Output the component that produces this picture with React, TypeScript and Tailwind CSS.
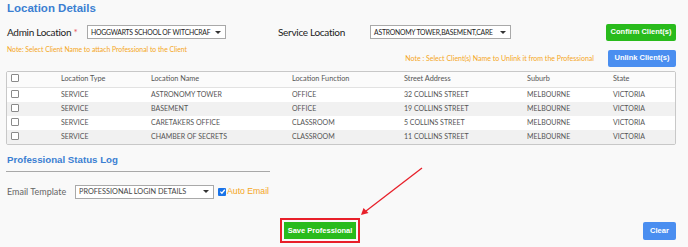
import React from "react";

const lato = "font-['Lato','Open_Sans',sans-serif]";
const arial = "font-['Liberation_Sans',Arial,sans-serif]";

function Box() {
  return <span className="inline-block w-[8px] h-[8px] border border-[#8a8a8a] rounded-[1px] bg-white" />;
}

function Select({ text, w, t }: { text: string; w: string; t?: string }) {
  return (
    <div className={`${w} h-[14px] border border-[#a9a9a9] bg-white flex items-center justify-between pl-[3px] pr-[4px]`}>
      <span className={`${lato} ${t ?? "text-[6.8px] tracking-[-0.2px] text-[#222]"} leading-none whitespace-nowrap`}>{text}</span>
      <span className="w-0 h-0 border-l-[3px] border-r-[3px] border-t-[3px] border-l-transparent border-r-transparent border-t-[#333] ml-[3px] shrink-0" />
    </div>
  );
}

const rows = [
  ["SERVICE", "ASTRONOMY TOWER", "OFFICE", "32 COLLINS STREET", "MELBOURNE", "VICTORIA"],
  ["SERVICE", "BASEMENT", "OFFICE", "19 COLLINS STREET", "MELBOURNE", "VICTORIA"],
  ["SERVICE", "CARETAKERS OFFICE", "CLASSROOM", "5 COLLINS STREET", "MELBOURNE", "VICTORIA"],
  ["SERVICE", "CHAMBER OF SECRETS", "CLASSROOM", "11 COLLINS STREET", "MELBOURNE", "VICTORIA"],
];

const cols = ["w-[54px]", "w-[90px]", "w-[141px]", "w-[112px]", "w-[123px]", "w-[86px]", "w-[64px]"];

export default function App() {
  return (
    <div className="relative w-[688px] h-[247px] bg-[#f9f9f9] overflow-hidden pl-[7px] pr-[12px]">
      <div className={`${arial} text-[11.5px] font-bold text-[#3b7fd2] leading-none pt-[3px]`}>Location Details</div>

      <div className="flex items-center mt-[9px] h-[17px]">
        <div className={`${lato} text-[10px] tracking-[-0.3px] text-[#222] w-[80px] whitespace-nowrap`}>
          Admin Location <span className="text-[#e8585e]">*</span>
        </div>
        <Select text="HOGGWARTS SCHOOL OF WITCHCRAF" w="w-[139px]" />
        <div className={`${lato} text-[10px] tracking-[-0.3px] text-[#222] ml-[52px] w-[92px] whitespace-nowrap`}>Service Location</div>
        <Select text="ASTRONOMY TOWER,BASEMENT,CARE" w="w-[141px]" />
        <button className={`${arial} ml-auto w-[70px] h-[17px] bg-[#29bb1c] rounded-[2px] text-white text-[7.5px] font-bold`}>Confirm Client(s)</button>
      </div>

      <div className="flex justify-between items-start h-[30px]">
        <div className={`${lato} text-[6.8px] text-[#f5a623] mt-[3px]`}>Note: Select Client Name to attach Professional to the Client</div>
        <div className="flex items-center mt-[9px]">
          <span className={`${lato} text-[7px] text-[#f5a623] mr-[14px]`}>Note : Select Client(s) Name to Unlink it from the Professional</span>
          <button className={`${arial} w-[68px] h-[17px] bg-[#4a8ef0] rounded-[2px] text-white text-[7.5px] font-bold`}>Unlink Client(s)</button>
        </div>
      </div>

      <div className="-ml-[1px] w-[670px] border border-[#c8c8c8] rounded-[2px] bg-white overflow-hidden">
        <table className={`${lato} w-full border-collapse table-fixed text-[7px] text-[#555]`}>
          <colgroup>
            {cols.map((c, i) => (
              <col key={i} className={c} />
            ))}
          </colgroup>
          <thead>
            <tr className="h-[16px] bg-[#fbfbfb] border-b border-[#e2e2e2]">
              <th className="text-left pl-[4px] font-normal"><Box /></th>
              {["Location Type", "Location Name", "Location Function", "Street Address", "Suburb", "State"].map((h) => (
                <th key={h} className="text-left font-normal text-[7.3px]">{h}</th>
              ))}
            </tr>
          </thead>
          <tbody>
            {rows.map((r, i) => (
              <tr key={i} className={`h-[14px] ${i % 2 === 1 ? "bg-[#f1f1f1]" : "bg-white"}`}>
                <td className="pl-[4px] leading-none"><Box /></td>
                {r.map((c, j) => (
                  <td key={j} className="whitespace-nowrap leading-none">{c}</td>
                ))}
              </tr>
            ))}
          </tbody>
        </table>
      </div>

      <div className={`${arial} text-[9.7px] font-bold text-[#3b7fd2] leading-none mt-[10px]`}>Professional Status Log</div>
      <div className="w-[264px] -ml-[1px] h-[1px] bg-[#a8a8a8] mt-[7px]" />

      <div className="flex items-center mt-[12px] h-[15px]">
        <div className={`${lato} text-[9px] text-[#666] w-[68px]`}>Email Template</div>
        <Select text="PROFESSIONAL LOGIN DETAILS" w="w-[139px]" t="text-[7.3px] text-[#444]" />
        <span className="ml-[4px] w-[8px] h-[8px] bg-[#1a73e8] rounded-[1px] flex items-center justify-center">
          <svg width="7" height="7" viewBox="0 0 8 8"><path d="M1.5 4.2 L3.3 6 L6.6 2" stroke="white" strokeWidth="1.4" fill="none" /></svg>
        </span>
        <span className={`${arial} text-[8.7px] text-[#f5a623] ml-[1px]`}>Auto Email</span>
      </div>

      <div className="flex items-center mt-[19px]">
        <div className="ml-[273px] border-2 border-[#e8202a] p-[2px]">
          <button className={`${arial} w-[72px] h-[17px] bg-[#29bb1c] text-white text-[7.5px] font-bold block`}>Save Professional</button>
        </div>
        <button className={`${arial} ml-auto w-[33px] h-[18px] bg-[#4a8ef0] rounded-[2px] text-white text-[7.5px] font-bold`}>Clear</button>
      </div>

      <svg className="absolute left-0 top-0" width="688" height="247" viewBox="0 0 688 247">
        <line x1="422" y1="168" x2="366" y2="211" stroke="#e8202a" strokeWidth="1.3" />
        <path d="M361 215 L363.5 208 L368.5 213 Z" fill="#e8202a" />
      </svg>
    </div>
  );
}
